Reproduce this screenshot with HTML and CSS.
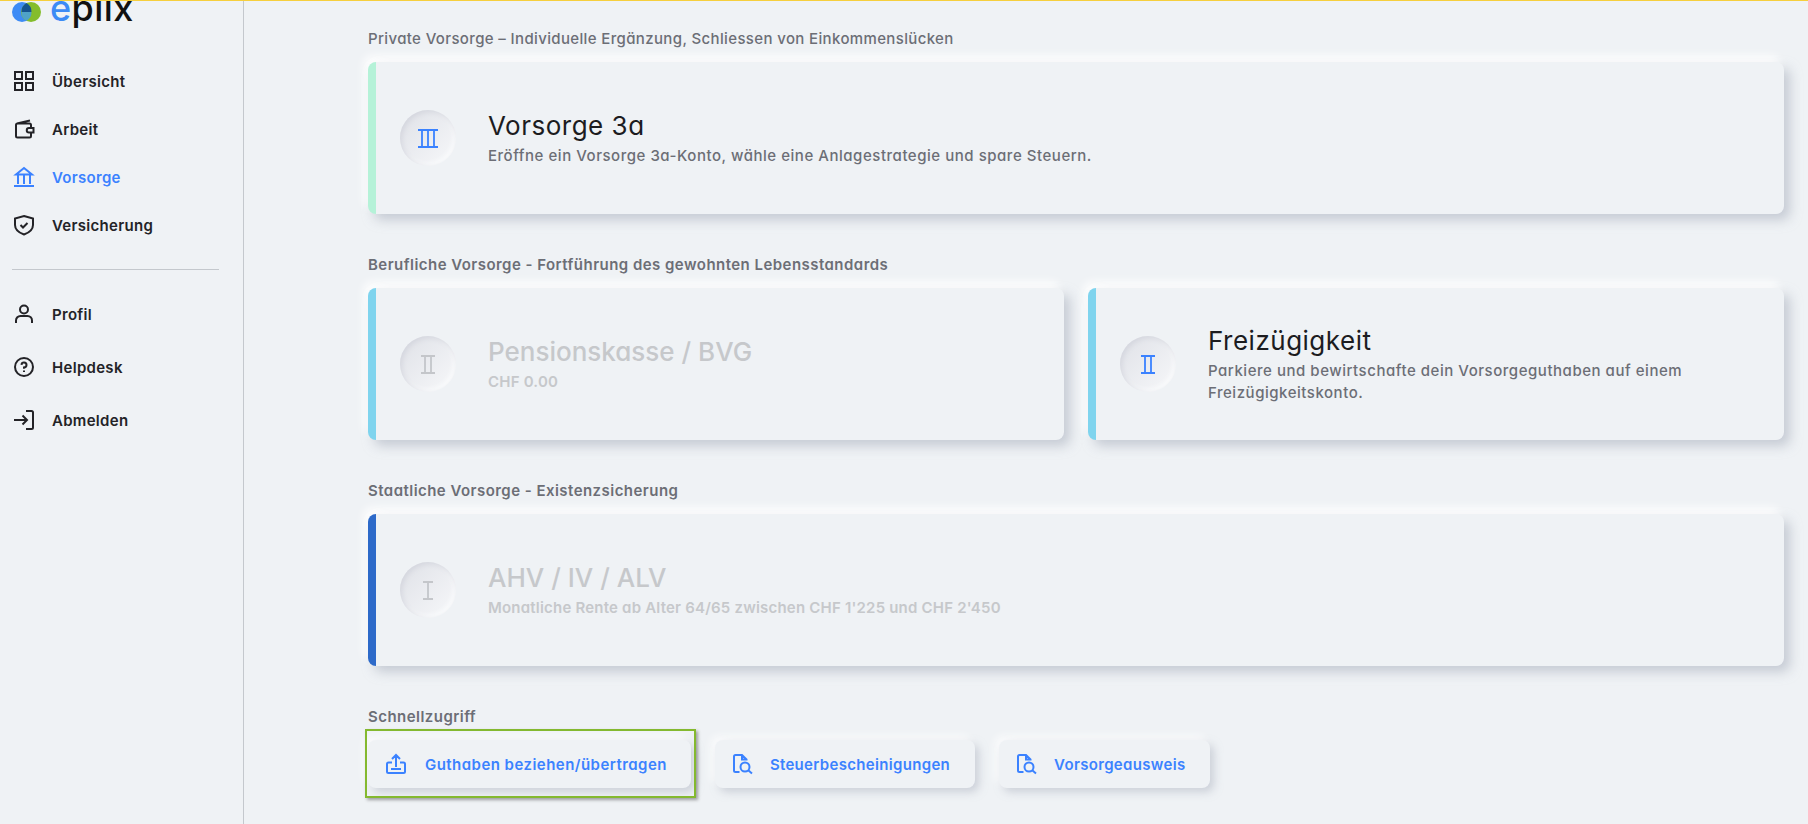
FILE: index.html
```html
<!doctype html>
<html lang="de">
<head>
    <meta charset="utf-8">
    <title>Vorsorge</title>
    <link rel="stylesheet" href="styles.css">
</head>
<body>
<div class="layout">
    <aside class="sidebar">
        <div class="logo">
            <svg class="logomark" width="29" height="20" viewBox="0 0 29 20">
                <circle cx="10" cy="10" r="10" fill="#3d8bf5"/>
                <circle cx="19" cy="10" r="10" fill="#84bd2c"/>
                <path d="M14.500 1.100a10 10 0 0 1 5 8.900h-10a10 10 0 0 1 5-8.900z" fill="#15548f"/>
                <path d="M9.500 10h10a10 10 0 0 1-5 8.900a10 10 0 0 1-5-8.900z" fill="#4fa3c8"/>
            </svg>
            <span class="logotext"><b>e</b>plix</span>
        </div>
        <nav class="nav">
            <a class="navitem">
                <svg class="navicon" viewBox="0 0 20 20"><path d="M1 1h7v7H1zM12 1h7v7h-7zM1 12h7v7H1zM12 12h7v7h-7z"/></svg>
                Übersicht
            </a>
            <a class="navitem">
                <svg class="navicon" viewBox="0 0 20 20"><path d="M17 9V6a1.500 1.500 0 0 0-1.500-1.500h-12A1.500 1.500 0 0 0 2 6v11a1.500 1.500 0 0 0 1.500 1.500h12A1.500 1.500 0 0 0 17 17v-3.500M3 4.500 16 1.500M15 9h4.500v4.500H15a2.250 2.250 0 0 1 0-4.500z"/></svg>
                Arbeit
            </a>
            <a class="navitem active">
                <svg class="navicon" viewBox="0 0 20 20"><path d="M2 7.500 10 1l8 6.500zM0 19h20M4 8v9M10 8v9M16 8v9"/></svg>
                Vorsorge
            </a>
            <a class="navitem">
                <svg class="navicon" viewBox="0 0 20 20"><path d="M10 1 19 3.500V10c0 4.500-3.500 7.500-9 9.500C4.500 17.500 1 14.500 1 10V3.500zM6.500 10l2.500 2.500 4.500-4.500"/></svg>
                Versicherung
            </a>
        </nav>
        <hr class="navline">
        <nav class="nav nav2">
            <a class="navitem">
                <svg class="navicon" viewBox="0 0 20 20"><circle cx="10" cy="5.500" r="4"/><path d="M2 19v-2.500A4.500 4.500 0 0 1 6.500 12h7a4.500 4.500 0 0 1 4.500 4.500V19"/></svg>
                Profil
            </a>
            <a class="navitem">
                <svg class="navicon" viewBox="0 0 20 20"><circle cx="10" cy="10" r="9"/><path d="M7.500 7.800A2.500 2.500 0 1 1 10 10.500v1.200M10 13.500v1.500"/></svg>
                Helpdesk
            </a>
            <a class="navitem">
                <svg class="navicon" viewBox="0 0 20 20"><path d="M12 1h5.500A1.500 1.500 0 0 1 19 2.500v15a1.500 1.500 0 0 1-1.500 1.500H12M0 10h13M8.500 5.500 13 10l-4.500 4.500"/></svg>
                Abmelden
            </a>
        </nav>
    </aside>

    <main class="main">
        <h2 class="seclabel">Private Vorsorge – Individuelle Ergänzung, Schliessen von Einkommenslücken</h2>
        <section class="cards">
            <div class="card mint">
                <div class="circle">
                    <svg class="numeral" width="20" height="19" viewBox="0 0 20 19"><path d="M0 1h20M0 18h20M4 1v17M10 1v17M16 1v17"/></svg>
                </div>
                <div class="cardtext">
                    <h3>Vorsorge 3a</h3>
                    <p>Eröffne ein Vorsorge 3a-Konto, wähle eine Anlagestrategie und spare Steuern.</p>
                </div>
            </div>
        </section>

        <h2 class="seclabel strong">Berufliche Vorsorge - Fortführung des gewohnten Lebensstandards</h2>
        <section class="cards two">
            <div class="card sky off">
                <div class="circle">
                    <svg class="numeral" width="14" height="19" viewBox="0 0 14 19"><path d="M0 1h14M0 18h14M4 1v17M10 1v17"/></svg>
                </div>
                <div class="cardtext">
                    <h3>Pensionskasse / BVG</h3>
                    <p>CHF 0.00</p>
                </div>
            </div>
            <div class="card sky">
                <div class="circle">
                    <svg class="numeral" width="14" height="19" viewBox="0 0 14 19"><path d="M0 1h14M0 18h14M4 1v17M10 1v17"/></svg>
                </div>
                <div class="cardtext">
                    <h3>Freizügigkeit</h3>
                    <p>Parkiere und bewirtschafte dein Vorsorgeguthaben auf einem Freizügigkeitskonto.</p>
                </div>
            </div>
        </section>

        <h2 class="seclabel strong">Staatliche Vorsorge - Existenzsicherung</h2>
        <section class="cards">
            <div class="card blue off">
                <div class="circle">
                    <svg class="numeral" width="10" height="19" viewBox="0 0 10 19"><path d="M0 1h10M0 18h10M5 1v17"/></svg>
                </div>
                <div class="cardtext">
                    <h3>AHV / IV / ALV</h3>
                    <p>Monatliche Rente ab Alter 64/65 zwischen CHF 1'225 und CHF 2'450</p>
                </div>
            </div>
        </section>

        <h2 class="seclabel strong quick">Schnellzugriff</h2>
        <div class="buttons">
            <a class="btn marked">
                <svg class="btnicon" viewBox="0 0 20 20"><path d="M6 8.500H2.500A1.500 1.500 0 0 0 1 10v7.500A1.500 1.500 0 0 0 2.500 19h15a1.500 1.500 0 0 0 1.500-1.500V10a1.500 1.500 0 0 0-1.500-1.500H14M10 13V1M6 5l4-4 4 4M5 15h10"/></svg>
                Guthaben beziehen/übertragen
            </a>
            <a class="btn">
                <svg class="btnicon" viewBox="0 0 20 20"><path d="M6.500 18H2.500A1.500 1.500 0 0 1 1 16.500v-14A1.500 1.500 0 0 1 2.500 1H9l4.500 4.500v1M9 1v4.500h4.500"/><circle cx="12" cy="13" r="4.500"/><path d="m15.500 16.500 3.500 3"/></svg>
                Steuerbescheinigungen
            </a>
            <a class="btn">
                <svg class="btnicon" viewBox="0 0 20 20"><path d="M6.500 18H2.500A1.500 1.500 0 0 1 1 16.500v-14A1.500 1.500 0 0 1 2.500 1H9l4.500 4.500v1M9 1v4.500h4.500"/><circle cx="12" cy="13" r="4.500"/><path d="m15.500 16.500 3.500 3"/></svg>
                Vorsorgeausweis
            </a>
        </div>
    </main>
</div>
</body>
</html>
```

FILE: styles.css
```css
*{margin:0;padding:0;box-sizing:border-box;}
html,body{height:100%;overflow:hidden;}
body{background:#eff2f5;border-top:1px solid #f6cf3d;font-family:Inter,"Noto Sans",sans-serif;font-feature-settings:"cv11";color:#1c1c1f;}
.layout{display:flex;height:100%;}

.sidebar{width:244px;flex:none;border-right:1px solid #c4c8cd;padding:0 24px 0 12px;}
.logo{display:flex;gap:9px;height:36px;margin-top:-11px;align-items:flex-start;}
.logomark{flex:none;margin-top:12px;}
.logotext{font-size:36px;line-height:36px;font-weight:500;letter-spacing:.4px;color:#111;}
.logotext b{font-weight:500;color:#3d8bf5;}
.nav{display:flex;flex-direction:column;margin-top:31px;}
.nav2{margin-top:20px;gap:5px;}
.navitem{display:flex;align-items:center;gap:18px;height:48px;padding-left:2px;font-size:15px;font-weight:600;letter-spacing:.3px;color:#232327;}
.navicon{width:20px;height:20px;flex:none;fill:none;stroke:currentColor;stroke-width:2;overflow:visible;}
.navitem.active{color:#3b82ff;}
.navline{border:0;border-top:1px solid #c4c8cd;margin-top:20px;}

.main{flex:1;padding:24px 24px 0 124px;min-width:0;}
.seclabel{font-size:15px;line-height:28px;font-weight:500;letter-spacing:.36px;color:#6c6e76;margin-bottom:9px;}
.seclabel.strong{font-weight:600;letter-spacing:.46px;}
.cards{display:grid;gap:24px;margin-bottom:37px;}
.cards.two{grid-template-columns:1fr 1fr;}
.card{height:152px;display:flex;align-items:center;gap:32px;padding-left:24px;background:#eff2f5;border-left:8px solid;border-radius:8px;box-shadow:6px 6px 12px rgba(170,176,190,.6),-4px -6px 10px #fff;}
.mint{border-left-color:#b5f2d8;}
.sky{border-left-color:#7fd4ee;}
.blue{border-left-color:#2d6ac9;}
.circle{width:56px;height:56px;flex:none;border-radius:50%;display:flex;align-items:center;justify-content:center;background:linear-gradient(135deg,#dfe1e7,#f7f8fa);box-shadow:inset 2px 2px 5px #d4d6de,inset -2px -2px 5px #fbfcfd;}
.numeral{fill:none;stroke:#3b82ff;stroke-width:1.8;}
.cardtext h3{font-size:26px;line-height:32px;font-weight:400;letter-spacing:.5px;color:#1c1c1f;margin-bottom:3px;}
.cardtext p{font-size:15px;line-height:22px;font-weight:500;letter-spacing:.53px;color:#6c6e76;padding-right:60px;}
.off .cardtext h3,.off .cardtext p{color:#c6c8cb;}
.off .cardtext h3{font-weight:500;letter-spacing:0;}
.off .cardtext p{font-weight:600;letter-spacing:.2px;}
.off .numeral{stroke:#c4c6ca;}

.seclabel.quick{margin-top:1px;}
.buttons{display:flex;gap:24px;}
.btn{position:relative;display:flex;align-items:center;gap:17px;height:48px;padding:0 25px 0 18px;border-radius:8px;background:#eff2f5;font-size:15px;font-weight:600;letter-spacing:.32px;color:#3b82ff;box-shadow:4px 4px 8px rgba(170,176,190,.5),-4px -4px 8px rgba(255,255,255,.8);}
.btnicon{width:20px;height:20px;flex:none;fill:none;stroke:currentColor;stroke-width:2;overflow:visible;}
/* drawn-on frame of the screenshot, not a focus ring */
.btn.marked{gap:19px;padding-right:24px;letter-spacing:.46px;}
.btn.marked::after{content:"";position:absolute;top:-11px;right:-5px;bottom:-10px;left:-3px;border:2px solid #84b92f;box-shadow:2px 2px 3px rgba(60,60,60,.45);}
```
